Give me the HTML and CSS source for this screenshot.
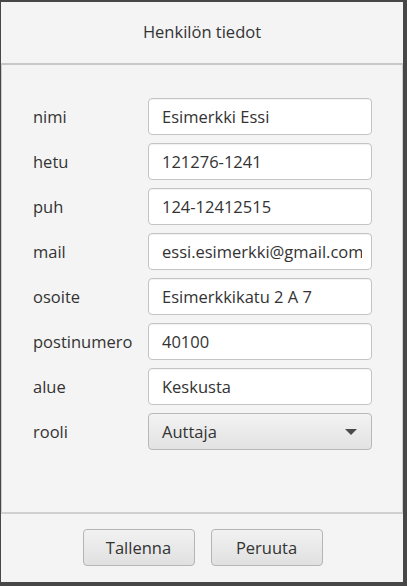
FILE: index.html
```html
<!DOCTYPE html>
<html lang="fi">
<head>
<meta charset="utf-8">
<title>Henkilön tiedot</title>
<link rel="stylesheet" href="styles.css">
</head>
<body>
<div class="window">
  <header class="header">Henkilön tiedot</header>
  <main class="pane">
    <div class="form">
      <label class="lbl">nimi</label><div class="field"><span class="val">Esimerkki Essi</span></div>
      <label class="lbl">hetu</label><div class="field"><span class="val">121276-1241</span></div>
      <label class="lbl">puh</label><div class="field"><span class="val">124-12412515</span></div>
      <label class="lbl">mail</label><div class="field"><span class="val">essi.esimerkki@gmail.com</span></div>
      <label class="lbl">osoite</label><div class="field"><span class="val">Esimerkkikatu 2 A 7</span></div>
      <label class="lbl">postinumero</label><div class="field"><span class="val">40100</span></div>
      <label class="lbl">alue</label><div class="field"><span class="val">Keskusta</span></div>
      <label class="lbl">rooli</label>
      <div class="combo"><span>Auttaja</span><span class="arrow"></span></div>
    </div>
  </main>
  <footer class="footer">
    <button class="btn">Tallenna</button>
    <button class="btn">Peruuta</button>
  </footer>
</div>
</body>
</html>
```

FILE: styles.css
```css
* { box-sizing: border-box; }
html, body { margin: 0; padding: 0; }
body {
  background: #474747;
  width: 407px;
  height: 586px;
  overflow: hidden;
  font-family: "Open Sans", "DejaVu Sans", sans-serif;
  color: #333333;
}
.window {
  margin: 2px 0 0 1px;
  width: 402px;
  height: 580px;
  background: #f4f4f4;
  display: flex;
  flex-direction: column;
}
.header {
  height: 61px;
  display: flex;
  align-items: center;
  justify-content: center;
  font-size: 16.5px;
  padding-bottom: 3px;
}
.pane {
  height: 451px;
  border: 1px solid #cccccc;
  border-top: 2px solid #c8c8c8;
  border-bottom: 2px solid #d0d0d0;
  padding: 33px 29px 0 30px;
}
.form {
  display: grid;
  grid-template-columns: 116px 224px;
  row-gap: 8px;
  align-items: center;
}
.lbl {
  font-size: 16.5px;
  padding-left: 1px;
}
.field, .combo {
  height: 37px;
  border: 1px solid #c4c4c4;
  border-radius: 4px;
  background: #ffffff;
  font-size: 16.5px;
  padding: 0 9px 0 13px;
  display: flex;
  align-items: center;
  white-space: nowrap;
  box-shadow: inset 0 1px 1px rgba(0,0,0,0.06);
}
.val {
  overflow: hidden;
  white-space: nowrap;
  flex: 1;
}
.combo {
  background: linear-gradient(#f3f3f3, #e2e2e2);
  border-color: #b8b8b8;
  justify-content: space-between;
  padding-right: 14px;
  box-shadow: none;
}
.arrow {
  width: 0;
  height: 0;
  border-left: 6px solid transparent;
  border-right: 6px solid transparent;
  border-top: 6px solid #4a4a4a;
  margin-top: 1px;
}
.footer {
  flex: 1;
  display: flex;
  justify-content: center;
  align-items: flex-start;
  gap: 16px;
  padding-top: 15px;
  padding-left: 1px;
}
.btn {
  width: 112px;
  height: 37px;
  border: 1px solid #b5b5b5;
  border-radius: 4px;
  background: linear-gradient(#f2f2f2, #e0e0e0);
  font-family: inherit;
  font-size: 16.5px;
  color: #333333;
  padding: 0;
}
```
